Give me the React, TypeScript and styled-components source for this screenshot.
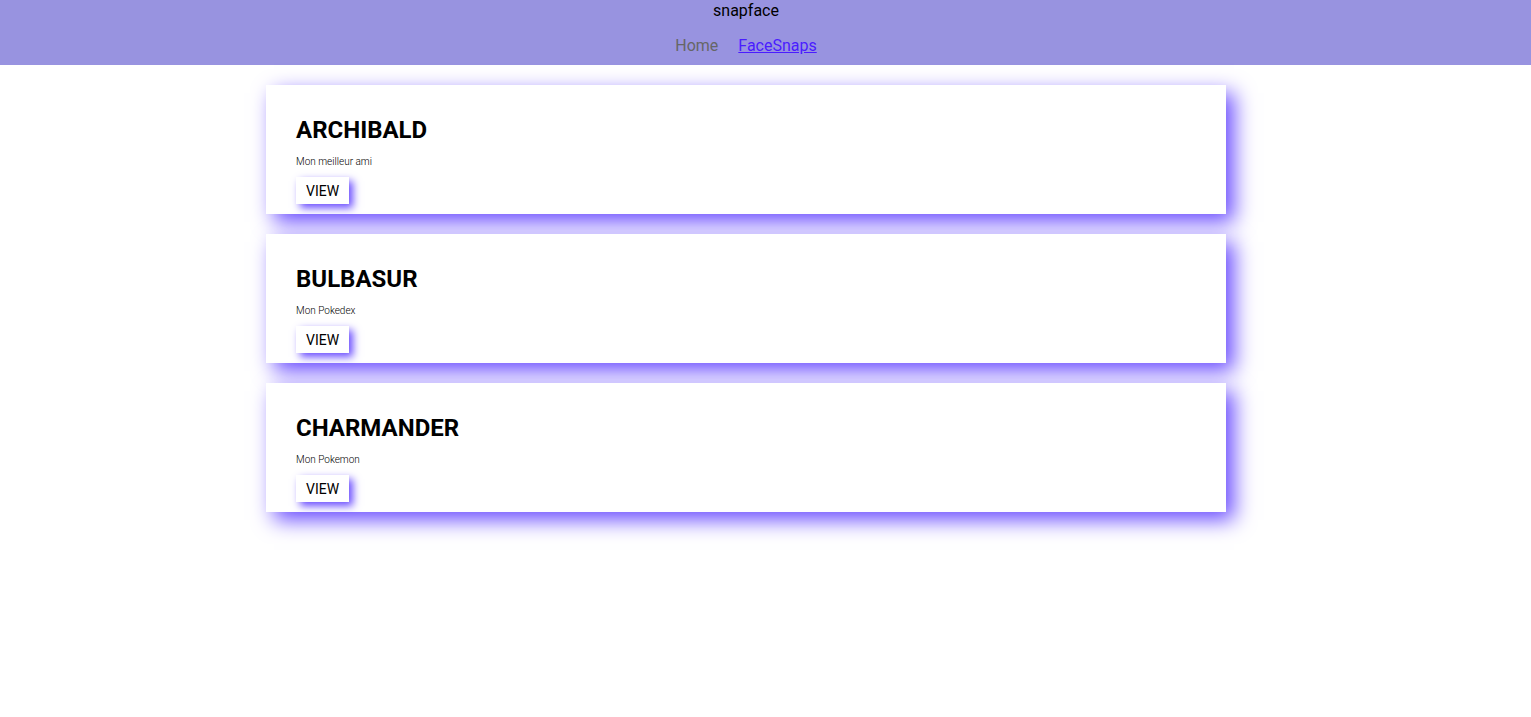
import React from "react";
import styled, { createGlobalStyle } from "styled-components";

const Global = createGlobalStyle`
  html, body { margin: 0; padding: 0; background: #fff; }
  body { font-family: Roboto, "Liberation Sans", sans-serif; color: #000; }
`;

const Header = styled.header`
  background: #9893e0;
  height: 65px;
  padding-right: 39px;
  display: flex;
  flex-direction: column;
  align-items: center;
`;

const Brand = styled.div`
  font-size: 16px;
  line-height: 19px;
  margin-top: 1px;
`;

const Nav = styled.nav`
  display: flex;
  gap: 20px;
  margin-top: 16px;
  font-size: 16px;
  line-height: 19px;
`;

const NavLink = styled.a<{ $active?: boolean }>`
  color: ${(p) => (p.$active ? "#4a1cff" : "#666")};
  text-decoration: ${(p) => (p.$active ? "underline" : "none")};
  cursor: pointer;
`;

const Page = styled.div`
  padding: 20px 39px 60px 0;
`;

const List = styled.main`
  width: 960px;
  margin: 0 auto;
  display: flex;
  flex-direction: column;
  gap: 20px;
`;

const Card = styled.section`
  background: #fff;
  padding: 31px 30px 10px;
  box-shadow: 8px 8px 20px #6a4cff;
  display: flex;
  flex-direction: column;
  align-items: flex-start;
`;

const Title = styled.h2`
  margin: 0;
  font-size: 24px;
  line-height: 28px;
  font-weight: 700;
`;

const Subtitle = styled.p`
  margin: 12px 0 0;
  font-size: 10px;
  line-height: 12px;
  font-weight: 300;
`;

const ViewButton = styled.button`
  margin-top: 9px;
  height: 27px;
  padding: 0 10px;
  border: none;
  background: #fff;
  font-family: Roboto, "Liberation Sans", sans-serif;
  font-size: 14px;
  font-weight: 400;
  color: #000;
  box-shadow: 4px 4px 8px #6a4cff;
  cursor: pointer;
`;

const snaps = [
  { title: "ARCHIBALD", desc: "Mon meilleur ami" },
  { title: "BULBASUR", desc: "Mon Pokedex" },
  { title: "CHARMANDER", desc: "Mon Pokemon" },
];

export default function App() {
  return (
    <>
      <Global />
      <Header>
        <Brand>snapface</Brand>
        <Nav>
          <NavLink>Home</NavLink>
          <NavLink $active>FaceSnaps</NavLink>
        </Nav>
      </Header>
      <Page>
        <List>
          {snaps.map((s) => (
            <Card key={s.title}>
              <Title>{s.title}</Title>
              <Subtitle>{s.desc}</Subtitle>
              <ViewButton>VIEW</ViewButton>
            </Card>
          ))}
        </List>
      </Page>
    </>
  );
}
